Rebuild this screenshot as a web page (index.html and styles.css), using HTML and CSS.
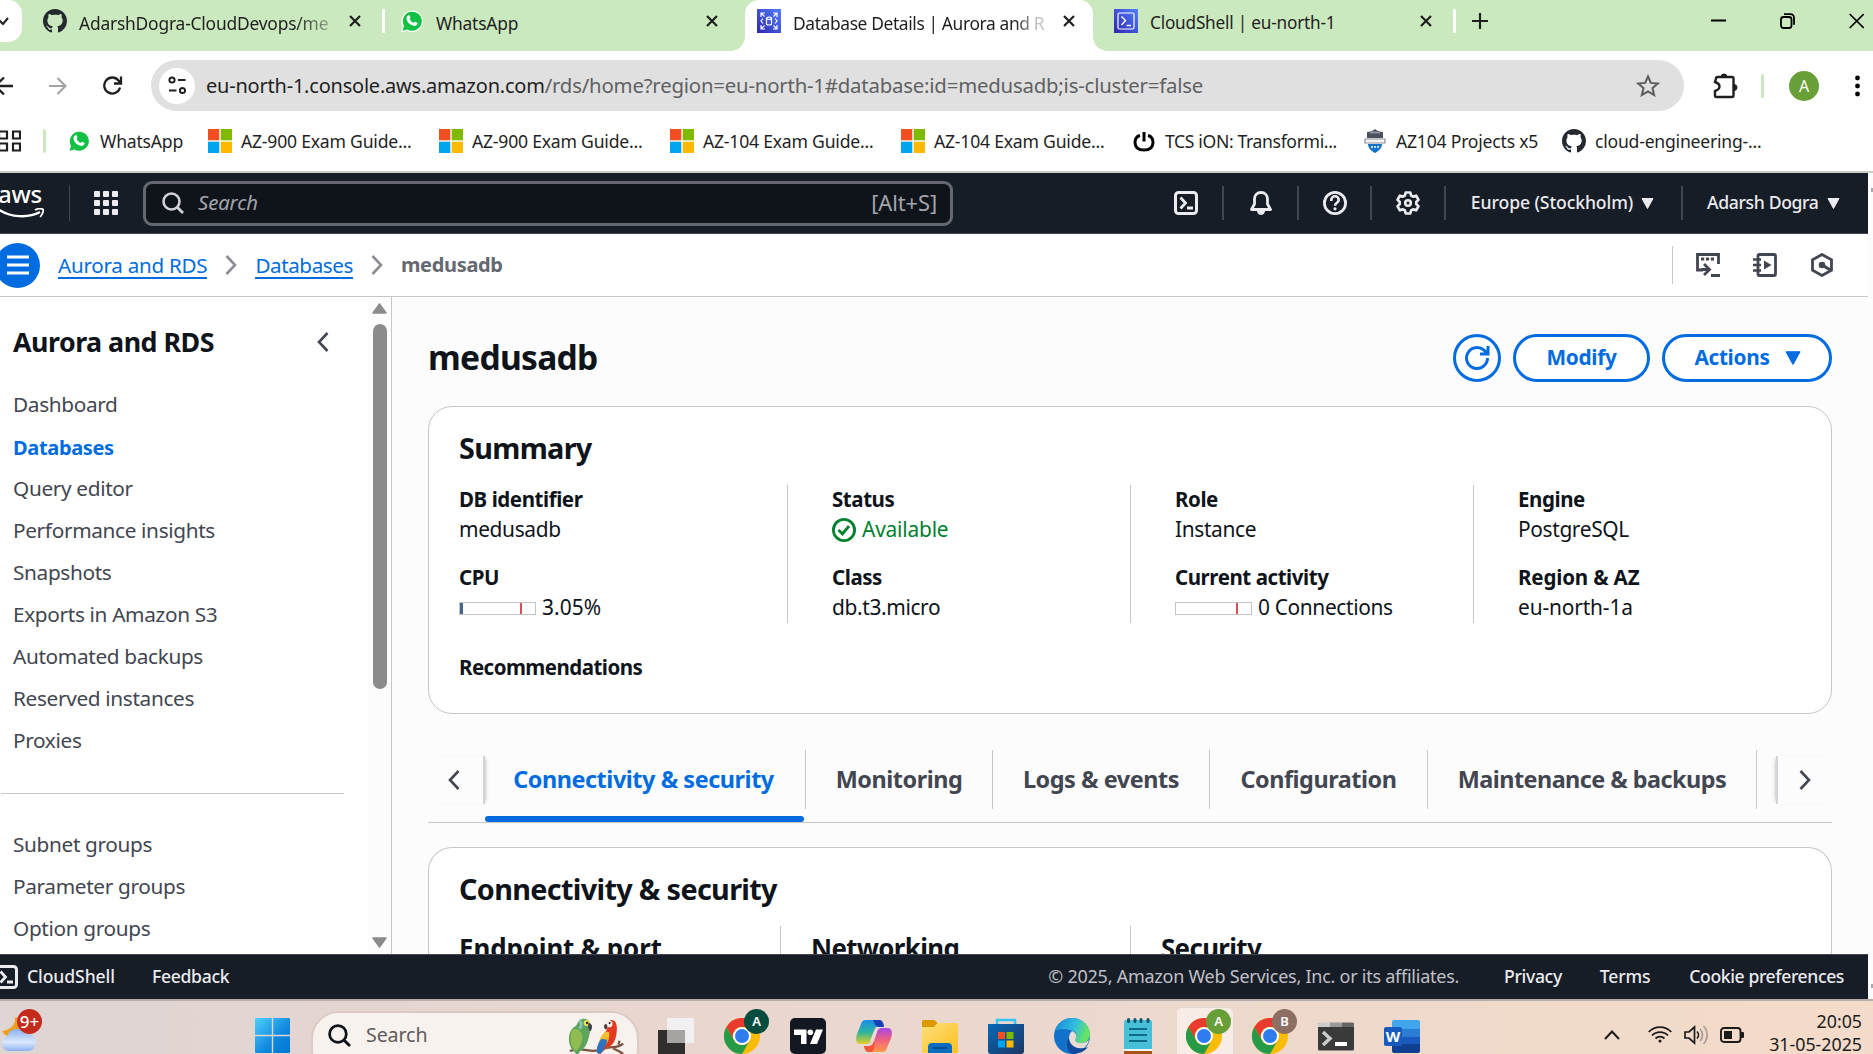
FILE: index.html
```html
<!DOCTYPE html>
<html lang="en">
<head>
<meta charset="utf-8">
<title>Database Details | Aurora and RDS</title>
<link rel="stylesheet" href="styles.css">
</head>
<body>
<svg class="defs" aria-hidden="true">
  <defs>
    <symbol id="github" viewBox="0 0 16 16"><path d="M8 0C3.58 0 0 3.58 0 8c0 3.54 2.29 6.53 5.47 7.59.4.07.55-.17.55-.38 0-.19-.01-.82-.01-1.49-2.01.37-2.53-.49-2.69-.94-.09-.23-.48-.94-.82-1.13-.28-.15-.68-.52-.01-.53.63-.01 1.08.58 1.23.82.72 1.21 1.87.87 2.33.66.07-.52.28-.87.51-1.07-1.78-.2-3.64-.89-3.64-3.95 0-.87.31-1.59.82-2.15-.08-.2-.36-1.02.08-2.12 0 0 .67-.21 2.2.82.64-.18 1.32-.27 2-.27s1.36.09 2 .27c1.53-1.04 2.2-.82 2.2-.82.44 1.1.16 1.92.08 2.12.51.56.82 1.27.82 2.15 0 3.07-1.87 3.75-3.65 3.95.29.25.54.73.54 1.48 0 1.07-.01 1.93-.01 2.2 0 .21.15.46.55.38A8.01 8.01 0 0 0 16 8c0-4.42-3.58-8-8-8z" fill="#24292f"/></symbol>
    <symbol id="whatsapp" viewBox="0 0 24 24"><path d="M1 23.500l1.700-6A10.800 10.800 0 1 1 7 21.800z" fill="#fff"/><path d="M2.600 21.800l1.400-5A9.500 9.500 0 1 1 7.500 20.400z" fill="#12c143"/><path d="M8.300 6.300c.5-.4 1-.3 1.300.3l.8 1.800c.2.500-.2 1-.8 1.700.9 1.900 2.200 3 4.100 3.800.6-.8 1-1.300 1.500-1.100l2 1c.5.300.4.700.2 1.300-.6 1.500-2.300 2.200-4 1.700-3.600-1-6-3.300-6.800-6.600-.3-1.600.4-3 1.700-3.900z" fill="#fff"/></symbol>
    <symbol id="microsoft" viewBox="0 0 24 24"><path d="M0 0h11.300v11.300H0z" fill="#f25022"/><path d="M12.700 0H24v11.300H12.700z" fill="#7fba00"/><path d="M0 12.700h11.300V24H0z" fill="#00a4ef"/><path d="M12.700 12.700H24V24H12.700z" fill="#ffb900"/></symbol>
    <symbol id="close" viewBox="0 0 12 12"><path d="M1 1l10 10M11 1L1 11" stroke="#1f1f1f" stroke-width="2.200"/></symbol>
    <symbol id="shell" viewBox="0 0 24 24"><rect x="1.500" y="1.500" width="21" height="21" rx="3" fill="none" stroke="currentColor" stroke-width="3"/><path d="M6.500 6.500l5 5.500-5 5.500M13 17h6" fill="none" stroke="currentColor" stroke-width="2.800"/></symbol>
    <symbol id="magnifier" viewBox="0 0 22 22"><circle cx="9.500" cy="9.500" r="8" fill="none" stroke="currentColor" stroke-width="2.600"/><path d="M15 15l6 6" stroke="currentColor" stroke-width="2.800"/></symbol>
    <symbol id="chev-left" viewBox="0 0 12 20"><path d="M10.500 1L2 10l8.500 9" fill="none" stroke="currentColor" stroke-width="2.600"/></symbol>
    <symbol id="chev-right" viewBox="0 0 12 20"><path d="M1.500 1L10 10l-8.500 9" fill="none" stroke="currentColor" stroke-width="2.600"/></symbol>
    <symbol id="caret" viewBox="0 0 13 11"><path d="M1 .500h11L6.500 10.500z" fill="currentColor" stroke="currentColor" stroke-linejoin="round"/></symbol>
    <symbol id="chrome" viewBox="0 0 36 36"><circle cx="18" cy="18" r="18" fill="#fbbc05"/><path d="M2.400 9A18 18 0 0 1 33.600 9H18a9 9 0 0 0-8 13.500z" fill="#ea3a2d"/><path d="M2.400 9A18 18 0 0 0 18 36l7.800-13.500a9 9 0 0 1-15.600 0z" fill="#259b47"/><circle cx="18" cy="18" r="9" fill="#fff"/><circle cx="18" cy="18" r="7" fill="#2f7bf0"/></symbol>
    <linearGradient id="aws-blue" x1="0" y1="1" x2="1" y2="0"><stop offset="0" stop-color="#2e27ad"/><stop offset="1" stop-color="#527fff"/></linearGradient>
    <linearGradient id="win" x1="0" y1="0" x2="1" y2="1"><stop offset="0" stop-color="#4fd0ff"/><stop offset=".6" stop-color="#0f87dd"/><stop offset="1" stop-color="#0078d4"/></linearGradient>
    <linearGradient id="cp-left" x1="0" y1="0" x2="0" y2="1"><stop offset="0" stop-color="#1a8bea"/><stop offset=".5" stop-color="#2bb5a0"/><stop offset="1" stop-color="#e3cf24"/></linearGradient>
    <linearGradient id="cp-right" x1="0" y1="0" x2="0" y2="1"><stop offset="0" stop-color="#a548e5"/><stop offset=".5" stop-color="#f0617f"/><stop offset="1" stop-color="#ff9a4a"/></linearGradient>
    <linearGradient id="edge" x1="0" y1="0" x2="1" y2=".3"><stop offset="0" stop-color="#1786d9"/><stop offset=".6" stop-color="#31bde0"/><stop offset="1" stop-color="#66e264"/></linearGradient>
    <linearGradient id="folder" x1="0" y1="0" x2="1" y2="1"><stop offset="0" stop-color="#ffe07a"/><stop offset="1" stop-color="#fdbf22"/></linearGradient>
    <linearGradient id="cloud" x1="0" y1="0" x2="0" y2="1"><stop offset="0" stop-color="#8ab1f1"/><stop offset=".6" stop-color="#dbe8fc"/><stop offset="1" stop-color="#8eb3f0"/></linearGradient>
    <linearGradient id="store" x1="0" y1="0" x2="1" y2="1"><stop offset="0" stop-color="#0669b7"/><stop offset="1" stop-color="#1e3562"/></linearGradient>
  </defs>
</svg>

<header class="tabstrip">
  <div class="tab-search"><svg width="12" height="10" viewBox="0 0 12 10"><path d="M-1 3l4 4 5-6" fill="none" stroke="#1f1f1f" stroke-width="2"/></svg></div>
  <div class="tab tab-github"><svg class="fav"><use href="#github"/></svg><span class="tab-title fade-green">AdarshDogra-CloudDevops/me</span><svg class="x"><use href="#close"/></svg></div>
  <i class="tab-sep"></i>
  <div class="tab tab-whatsapp"><svg class="fav"><use href="#whatsapp"/></svg><span class="tab-title">WhatsApp</span><svg class="x"><use href="#close"/></svg></div>
  <div class="tab tab-active"><svg class="fav" viewBox="0 0 24 24"><path d="M0 0h24v24H0z" fill="url(#aws-blue)"/><g fill="none" stroke="#fff" stroke-width="1.200"><path d="M4 8V4h4M4 4l3.500 3.500M16 4h4v4M20 4l-3.500 3.500M4 16v4h4M4 20l3.500-3.500M20 16v4h-4M20 20l-3.500-3.500M6 9.500L4 12l2 2.500M18 9.500l2 2.500-2 2.500"/><ellipse cx="12" cy="9.300" rx="2.500" ry="1.200"/><path d="M9.500 9.300v5.400c0 1.700 5 1.700 5 0V9.300"/></g></svg><span class="tab-title fade-white">Database Details | Aurora and R</span><svg class="x"><use href="#close"/></svg></div>
  <div class="tab tab-shell"><svg class="fav" viewBox="0 0 24 24"><path d="M0 0h24v24H0z" fill="url(#aws-blue)"/><rect x="4" y="4" width="16" height="16" rx="1.500" fill="none" stroke="#fff" stroke-width="1.200"/><path d="M7.500 7.500l4 4-4 4.500M12.500 16.500h4.500" fill="none" stroke="#fff" stroke-width="1.400"/></svg><span class="tab-title">CloudShell | eu-north-1</span><svg class="x"><use href="#close"/></svg></div>
  <i class="tab-sep"></i>
  <svg class="plus" width="16" height="16"><path d="M8 0v16M0 8h16" stroke="#1f1f1f" stroke-width="2.200"/></svg>
  <div class="window-controls">
    <svg width="15" height="16"><path d="M0 7.500h15" stroke="#000" stroke-width="2"/></svg>
    <svg width="15" height="16"><rect x="1" y="4" width="10.500" height="11" rx="2.500" fill="none" stroke="#000" stroke-width="1.800"/><path d="M4 1.200h6.500a3.500 3.500 0 0 1 3.500 3.500v7" fill="none" stroke="#000" stroke-width="1.800"/></svg>
    <svg width="15" height="16"><path d="M.7 1l14 14M14.700 1L.7 15" stroke="#000" stroke-width="1.700"/></svg>
  </div>
</header>

<div class="toolbar">
  <svg class="nav-back" width="13" height="20" viewBox="0 0 13 20"><path d="M13 10H-4M4 1.500L-5 10l9 8.500" fill="none" stroke="#1f1f1f" stroke-width="2.400"/></svg>
  <svg class="nav-fwd" width="18" height="18" viewBox="0 0 18 18"><path d="M0 9h16.500M8.500 1L16.500 9l-8 8" fill="none" stroke="#a3a3a3" stroke-width="2.200"/></svg>
  <svg class="nav-reload" width="20" height="19" viewBox="0 0 20 19"><path d="M17 11.500A8 8 0 1 1 15.500 4.500L18 7.200M18 .5v7h-7" fill="none" stroke="#1f1f1f" stroke-width="2.300"/></svg>
  <div class="omnibox">
    <div class="site-info"><svg width="18" height="19" viewBox="0 0 18 19" fill="none" stroke="#1f1f1f" stroke-width="2"><circle cx="4" cy="4" r="2.600"/><path d="M10 4h7.500M1 14.500h7.500"/><circle cx="14.500" cy="14.500" r="2.600"/></svg></div>
    <span class="url"><b>eu-north-1.console.aws.amazon.com</b><span>/rds/home?region=eu-north-1#database:id=medusadb;is-cluster=false</span></span>
    <svg class="star" width="24" height="23" viewBox="0 0 24 23"><path d="M12 2.500l2.800 6.400 7 .6-5.300 4.600 1.600 6.900-6.100-3.700L5.900 21l1.600-6.900L2.200 9.500l7-.6z" fill="none" stroke="#5c5c5c" stroke-width="2"/></svg>
  </div>
  <svg class="puzzle" width="25" height="26" viewBox="0 0 25 26"><path d="M3 5.500a1.500 1.500 0 0 1 1.500-1.500h14.500a1.500 1.500 0 0 1 1.500 1.500v17a1.500 1.500 0 0 1-1.500 1.500H3.500a1.500 1.500 0 0 1-1.500-1.500V18c6-2 6-7 0-9z" fill="none" stroke="#1f1f1f" stroke-width="2.400"/><path d="M8 4a3 3 0 0 1 6 0zM21 11.500a3 3 0 0 1 0 6z" fill="#1f1f1f" stroke="#1f1f1f"/></svg>
  <i class="tool-sep"></i>
  <div class="avatar">A</div>
  <svg class="dots" width="5" height="22"><circle cx="2.500" cy="3" r="2.400"/><circle cx="2.500" cy="11" r="2.400"/><circle cx="2.500" cy="19" r="2.400"/></svg>
</div>

<nav class="bookmarks">
  <svg class="apps" width="21" height="22" viewBox="0 0 21 22" fill="none" stroke="#1f1f1f" stroke-width="2.200"><path d="M-1 1.500h8v7h-8zM13 1.500h7v7h-7zM-1 13.500h8v7h-8zM13 13.500h7v7h-7z"/></svg>
  <i class="tool-sep"></i>
  <a class="bm bm-short"><svg><use href="#whatsapp"/></svg>WhatsApp</a>
  <a class="bm"><svg><use href="#microsoft"/></svg>AZ-900 Exam Guide...</a>
  <a class="bm"><svg><use href="#microsoft"/></svg>AZ-900 Exam Guide...</a>
  <a class="bm"><svg><use href="#microsoft"/></svg>AZ-104 Exam Guide...</a>
  <a class="bm"><svg><use href="#microsoft"/></svg>AZ-104 Exam Guide...</a>
  <a class="bm bm-tcs"><svg viewBox="0 0 24 24"><path d="M8 6.500C4 7.500 3 9.500 3 13.500c0 5.500 3 7.500 9 7.500s9-2 9-7.500c0-4-1-6-5-7" fill="none" stroke="#000" stroke-width="3"/><path d="M12 3v9.500" stroke="#000" stroke-width="3"/></svg>TCS iON: Transformi...</a>
  <a class="bm bm-mid"><svg viewBox="0 0 24 24"><path d="M4 3c3 0 6-1 8-3 2 2 5 3 8 3v6H4z" fill="#4c525c"/><path d="M7 3.500h10" stroke="#8d95a3" stroke-width="2"/><path d="M2 10h20v4H2z" fill="#f4f4f4" stroke="#8a8f98" stroke-width="1.200"/><path d="M5 15h14c0 4-3 7-7 9-4-2-7-5-7-9z" fill="#1673c4"/><path d="M8 18h8" stroke="#b8dcf8" stroke-width="2" stroke-dasharray="2 1"/></svg>AZ104 Projects x5</a>
  <a class="bm"><svg><use href="#github"/></svg>cloud-engineering-...</a>
</nav>

<div class="viewport">
<div class="console">
  <header class="topnav">
    <div class="aws-logo"><span>aws</span><svg width="46" height="11" viewBox="0 0 46 11"><path d="M-2 1c12 8.500 30 9.500 42 3" fill="none" stroke="#fff" stroke-width="2.400"/><path d="M35 2c3-1.500 6.500-1.600 8-.6.700 1.400-.5 5-2.800 7.600" fill="none" stroke="#fff" stroke-width="1.800"/></svg></div>
    <i class="nav-sep"></i>
    <svg class="waffle" width="24" height="24" fill="#ebebf0"><rect width="6" height="6" rx="1"/><rect x="9" width="6" height="6" rx="1"/><rect x="18" width="6" height="6" rx="1"/><rect y="9" width="6" height="6" rx="1"/><rect x="9" y="9" width="6" height="6" rx="1"/><rect x="18" y="9" width="6" height="6" rx="1"/><rect y="18" width="6" height="6" rx="1"/><rect x="9" y="18" width="6" height="6" rx="1"/><rect x="18" y="18" width="6" height="6" rx="1"/></svg>
    <div class="searchbox"><svg width="22" height="22"><use href="#magnifier"/></svg><em>Search</em><span>[Alt+S]</span></div>
    <div class="topcells">
      <div class="cell c74"><svg width="24" height="24"><use href="#shell"/></svg></div>
      <div class="cell c75"><svg width="24" height="24" viewBox="0 0 24 24"><path d="M12 1.500c4 0 6.500 2.800 6.500 6.500v5l3 5.500h-19l3-5.500V8c0-3.700 2.500-6.500 6.500-6.500z" fill="none" stroke="currentColor" stroke-width="2.800" stroke-linejoin="round"/><path d="M8.500 20h7a3.500 3.500 0 0 1-7 0z" fill="currentColor" stroke="currentColor"/></svg></div>
      <div class="cell c73"><svg width="24" height="24" viewBox="0 0 24 24"><circle cx="12" cy="12" r="10.600" fill="none" stroke="currentColor" stroke-width="2.800"/><path d="M8.300 10V9a3.700 3.700 0 0 1 7.400 0c0 2.700-3.700 2.700-3.700 5.700" fill="none" stroke="currentColor" stroke-width="2.600"/><circle cx="12" cy="17.800" r="1.600" fill="currentColor"/></svg></div>
      <div class="cell c74"><svg width="24" height="24" viewBox="0 0 24 24"><path d="M9.700 1.500h4.600l.8 3 2 1.100 3-.9 2.300 4-2.100 2.200v2.200l2.100 2.200-2.300 4-3-.9-2 1.100-.8 3H9.700l-.8-3-2-1.100-3 .9-2.300-4 2.100-2.200v-2.200L1.600 8.700l2.300-4 3 .9 2-1.100z" fill="none" stroke="currentColor" stroke-width="2.700" stroke-linejoin="round"/><circle cx="12" cy="12" r="2.800" fill="none" stroke="currentColor" stroke-width="2.600"/></svg></div>
      <div class="cell c237"><span>Europe (Stockholm)</span><svg width="13" height="11"><use href="#caret"/></svg></div>
      <div class="cell cell-user"><span>Adarsh Dogra</span><svg width="13" height="11"><use href="#caret"/></svg></div>
    </div>
  </header>

  <div class="crumbbar">
    <div class="burger"><svg width="22" height="20"><path d="M0 2h22M0 10h22M0 18h22" stroke="#fff" stroke-width="2.800"/></svg></div>
    <a class="crumb">Aurora and RDS</a>
    <svg class="crumb-chev"><use href="#chev-right"/></svg>
    <a class="crumb">Databases</a>
    <svg class="crumb-chev"><use href="#chev-right"/></svg>
    <b class="crumb-now">medusadb</b>
    <div class="crumb-tools">
      <svg width="24" height="24" viewBox="0 0 24 24"><path d="M7 17H1.500V1.500h21V11" fill="none" stroke="#424650" stroke-width="2.800"/><path d="M5 6h13" stroke="#424650" stroke-width="3" stroke-dasharray="3.200 1.700"/><path d="M5 16.500h7M8 11l5.500 5.500L8 22" fill="none" stroke="#424650" stroke-width="2.800"/><path d="M15 22.500h9" stroke="#424650" stroke-width="3"/></svg>
      <svg width="24" height="24" viewBox="0 0 24 24"><rect x="5" y="1.500" width="17.500" height="21" rx="1.500" fill="none" stroke="#424650" stroke-width="2.800"/><path d="M0 6.500h8M0 12h8M0 17.500h8" stroke="#424650" stroke-width="2.500"/><path d="M11 7.500l7.500 4.500-7.500 4.500z" fill="#424650"/></svg>
      <svg width="24" height="24" viewBox="0 0 24 24"><path d="M12 1.500l9.500 5.300v10.400L12 22.500l-9.500-5.300V6.800z" fill="none" stroke="#424650" stroke-width="2.800"/><circle cx="12" cy="12" r="3.300" fill="#424650"/><path d="M12 12l8.500 5" stroke="#424650" stroke-width="3"/></svg>
    </div>
  </div>

  <div class="body">
    <aside class="sidebar">
      <div class="side-content">
        <div class="side-head"><h2>Aurora and RDS</h2><svg width="12" height="20"><use href="#chev-left"/></svg></div>
        <ul>
          <li>Dashboard</li><li class="on">Databases</li><li>Query editor</li><li>Performance insights</li><li>Snapshots</li><li>Exports in Amazon S3</li><li>Automated backups</li><li>Reserved instances</li><li>Proxies</li>
        </ul>
        <hr>
        <ul><li>Subnet groups</li><li>Parameter groups</li><li>Option groups</li></ul>
      </div>
      <div class="side-scroll">
        <svg width="15" height="11" viewBox="0 0 15 11"><path d="M7.500 1L14 10H1z" fill="#8b8b8b" stroke="#8b8b8b" stroke-width="1.500" stroke-linejoin="round"/></svg>
        <i class="thumb"></i>
        <svg width="15" height="11" viewBox="0 0 15 11"><path d="M7.500 10L14 1H1z" fill="#8b8b8b" stroke="#8b8b8b" stroke-width="1.500" stroke-linejoin="round"/></svg>
      </div>
    </aside>

    <main class="main">
      <div class="title-row">
        <h1>medusadb</h1>
        <button class="btn btn-round"><svg width="26" height="26" viewBox="0 0 26 26"><path d="M23.500 13a10.500 10.500 0 1 1-3.500-7.800l3.500 3.500M24 1v8h-8" fill="none" stroke="#006ce0" stroke-width="3"/></svg></button>
        <button class="btn btn-modify"><span>Modify</span></button>
        <button class="btn btn-actions"><span>Actions</span><svg width="16" height="14" viewBox="0 0 13 11"><path d="M1 .5h11L6.500 10.500z" fill="#006ce0" stroke="#006ce0" stroke-linejoin="round"/></svg></button>
      </div>

      <section class="card summary">
        <h3>Summary</h3>
        <div class="facts">
          <dl><dt>DB identifier</dt><dd>medusadb</dd><dt>CPU</dt><dd><i class="meter"><i class="used"></i></i><span class="pct">3.05%</span></dd></dl>
          <dl><dt>Status</dt><dd class="ok"><svg width="24" height="24" viewBox="0 0 24 24"><circle cx="12" cy="12" r="10.600" fill="none" stroke="#00802f" stroke-width="2.800"/><path d="M6.500 12l4 4 6.500-8" fill="none" stroke="#00802f" stroke-width="2.800"/></svg>Available</dd><dt>Class</dt><dd>db.t3.micro</dd></dl>
          <dl><dt>Role</dt><dd>Instance</dd><dt>Current activity</dt><dd><i class="meter"></i>0 Connections</dd></dl>
          <dl><dt>Engine</dt><dd>PostgreSQL</dd><dt class="region">Region &amp; AZ</dt><dd class="region">eu-north-1a</dd></dl>
        </div>
        <b class="reco">Recommendations</b>
      </section>

      <div class="tabs">
        <div class="tabs-prev"><svg width="12" height="20"><use href="#chev-left"/></svg></div>
        <div class="t t1">Connectivity &amp; security</div>
        <div class="t t2">Monitoring</div>
        <div class="t t3">Logs &amp; events</div>
        <div class="t t4">Configuration</div>
        <div class="t t5">Maintenance &amp; backups</div>
        <div class="tabs-next"><svg width="12" height="20"><use href="#chev-right"/></svg></div>
      </div>

      <section class="card conn">
        <h3>Connectivity &amp; security</h3>
        <div class="conn-cols"><h4 class="wide">Endpoint &amp; port</h4><h4>Networking</h4><h4>Security</h4></div>
      </section>
    </main>
  </div>

  <footer class="footer">
    <svg class="foot-shell" width="24" height="24"><use href="#shell"/></svg>
    <span class="foot-cs">CloudShell</span><span class="feedback">Feedback</span>
    <span class="copy">© 2025, Amazon Web Services, Inc. or its affiliates.</span>
    <span class="privacy">Privacy</span><span class="terms">Terms</span><span class="cookie">Cookie preferences</span>
  </footer>
</div>
<div class="page-scroll"><i></i><i></i></div>
</div>

<div class="taskbar">
  <div class="weather"><svg width="40" height="40" viewBox="0 0 40 40"><path d="M15 4c1 8-5 13-13 14 1 2 3 4 5 5l15-3V6z" fill="#f0a01e"/><path d="M8 38a7.500 7.500 0 0 1-1-14.500A10.500 10.500 0 0 1 26 21a8.500 8.500 0 0 1 3 17z" fill="url(#cloud)"/></svg><b class="count">9+</b></div>
  <svg class="start" width="35" height="35" viewBox="0 0 35 35"><path d="M1 0h15.800v16.800H0V1a1 1 0 0 1 1-1zM18.200 0H34a1 1 0 0 1 1 1v15.800H18.200zM0 18.200h16.800V35H1a1 1 0 0 1-1-1zM18.200 18.200H35V34a1 1 0 0 1-1 1H18.200z" fill="url(#win)"/></svg>
  <div class="task-search"><svg class="mag" width="23" height="23"><use href="#magnifier"/></svg><span>Search</span>
    <svg class="parrots" width="58" height="38" viewBox="0 0 62 40"><path d="M2 35c14-6 22 4 34-2 10-4 16 0 23-6M48 32l6 3 5 3M54 28l1-4" fill="none" stroke="#7d5340" stroke-width="2.500"/><path d="M14 1c6-2 11 2 10 9-1 10-4 22-11 25l-3 5-3-4C-1 30-1 14 7 9c3-1 3-6 7-8z" fill="#5da45c"/><path d="M5 12c5-2 12 2 10 12-1 5-4 9-7 11-6-5-7-17-3-23z" fill="#91bc52"/><path d="M12 2c3 3 3 7 0 9" stroke="#86c7b9" stroke-width="3" fill="none"/><circle cx="20" cy="5" r="3.200" fill="#f6df55"/><circle cx="20.500" cy="5" r="1.300" fill="#222"/><path d="M22 5c5 1 4 6 2 9-2-2-3-4-2-9z" fill="#3c4247"/><path d="M45 2c6-1 8 4 7 13-1 9-4 15-11 17l-8 7-1-3c2-8 4-17 9-23z" fill="#e3391f"/><path d="M41 14c-6 3-8 10-9 17l5 2c4-4 8-11 7-18z" fill="#f3bf2e"/><path d="M36 22c-4 4-6 11-5 15l4 1c3-3 6-9 7-15z" fill="#2e71bd"/><circle cx="44" cy="6" r="3.600" fill="#f7ebe3"/><circle cx="44.500" cy="5" r="1.100" fill="#222"/><path d="M41 6c-3 0-3 4-1 6 2-1 3-3 1-6z" fill="#443936"/></svg>
  </div>
  <div class="apps-row">
    <svg viewBox="0 0 36 36"><path d="M0 12h27v24H0z" fill="#302f2e"/><path d="M9 0h27v25H9z" fill="#f2f2f2" opacity=".9"/><path d="M9 12h18v13H9z" fill="#a5a4a3"/></svg>
    <div class="badged"><svg viewBox="0 0 36 36"><use href="#chrome"/></svg><b class="bg-teal">A</b></div>
    <svg viewBox="0 0 36 36"><rect width="36" height="36" rx="5" fill="#131722"/><path d="M4 11.500h12.500V26H11V17H4zM26 11.500h7L27 26h-7z" fill="#fff"/><circle cx="20.300" cy="14.300" r="2.800" fill="#fff"/></svg>
    <svg viewBox="0 0 36 36"><path d="M10 2h13c3 0 4 2 5 6h-5c-3 0-4 2-5 5l-3 9c-1 3-2 4-5 4H5c-5 0-6-4-4-10L5 6c1-3 2-4 5-4z" fill="url(#cp-left)"/><path d="M17 2h6c3 0 4 2 5 7h-5c-3 0-4-2-6-7z" fill="#1a3fb5"/><path d="M26 34H13c-3 0-4-2-5-6h5c3 0 4-2 5-5l3-9c1-3 2-4 5-4h5c5 0 6 4 4 10l-4 10c-1 3-2 4-5 4z" fill="url(#cp-right)"/><path d="M8 28h5c3 0 4-2 5-5 1 4 1 8-2 11h-3c-3 0-4-2-5-6z" fill="#f2563c"/><path d="M18 13h3l-4 10h-3z" fill="#eadcd7"/></svg>
    <svg viewBox="0 0 36 36"><path d="M0 3.500A1.500 1.500 0 0 1 1.500 2h11l3 3-3 4H0z" fill="#dd9a00"/><path d="M0 9h12l4-4h19a1 1 0 0 1 1 1v29H0z" fill="url(#folder)"/><path d="M6 35v-6c0-2 1-4 4-4h16c3 0 4 2 4 4v6z" fill="#0c6cc0"/><path d="M11 30h14" stroke="#064e94" stroke-width="2"/></svg>
    <svg viewBox="0 0 36 36"><path d="M9 7V2h18v5" fill="none" stroke="#34c5f5" stroke-width="2.500"/><path d="M0 6h36v27a3 3 0 0 1-3 3H3a3 3 0 0 1-3-3z" fill="url(#store)"/><path d="M10 14h7v7h-7z" fill="#f25022"/><path d="M18.500 14h7v7h-7z" fill="#7fba00"/><path d="M10 22.500h7v7h-7z" fill="#00a4ef"/><path d="M18.500 22.500h7v7h-7z" fill="#ffb900"/></svg>
    <svg viewBox="0 0 36 36"><circle cx="18" cy="18" r="18" fill="#1271c9"/><path d="M1 13C4 5 10 0 18 0c10 0 18 7 18 16 0 6-4 9-9 9-4 0-7-2-5-5 1-4-1-8-6-8-6-2-12-1-15 1z" fill="url(#edge)"/><path d="M22 20c-2 3 1 5 5 5 3 0 6-1 8-3-1 4-3 6-5 8-6 2-15-2-15-10 0-3 1-5 3-7 3 1 5 4 4 7z" fill="#eadbd3"/><path d="M15 20c0 8 9 13 19 9-4 5-10 7-16 7-5-3-7-11-3-16z" fill="#124a9b"/></svg>
    <svg viewBox="0 0 36 36"><path d="M4 33h28v3H4z" fill="#a65514"/><path d="M4 4a2 2 0 0 1 2-2h24a2 2 0 0 1 2 2v28H4z" fill="#48bfd9"/><path d="M4 31h28v2H4z" fill="#f4f4f4"/><path d="M8.500 1.500v2M15 1.500v2M21 1.500v2M28 1.500v2" stroke="#0c5569" stroke-width="3" stroke-linecap="round"/><path d="M9 11h18M9 17h18M9 23h18" stroke="#0b6e86" stroke-width="2"/></svg>
    <div class="badged active"><svg viewBox="0 0 36 36"><use href="#chrome"/></svg><b class="bg-green">A</b></div>
    <div class="badged"><svg viewBox="0 0 36 36"><use href="#chrome"/></svg><b class="bg-brown">B</b></div>
    <svg viewBox="0 0 36 36"><path d="M0 5h36v26a1.500 1.500 0 0 1-1.500 1.500h-33A1.500 1.500 0 0 1 0 31z" fill="#3a3a3a"/><path d="M0 9V6a1.500 1.500 0 0 1 1.500-1.500H12V9z" fill="#ccc"/><path d="M12 4.500h12V9H12z" fill="#999"/><path d="M24 4.500h10.500A1.500 1.500 0 0 1 36 6v3H24z" fill="#666"/><path d="M5 14l7 6.500L5 27" fill="none" stroke="#ccc" stroke-width="3.500"/><path d="M17 26h12" stroke="#fff" stroke-width="4"/></svg>
    <svg viewBox="0 0 36 36"><path d="M8 4a2 2 0 0 1 2-2h24a2 2 0 0 1 2 2v7H8z" fill="#41a5ee"/><path d="M8 11h28v8H8z" fill="#2b7cd3"/><path d="M8 19h28v7H8z" fill="#185abd"/><path d="M8 26h28v7a2 2 0 0 1-2 2H10a2 2 0 0 1-2-2z" fill="#103f91"/><rect y="9" width="18" height="19" rx="2" fill="#185abd"/><text x="9" y="23.500" class="w-letter">W</text></svg>
  </div>
  <div class="tray">
    <svg width="16" height="10"><path d="M1 9l7-7.500L15 9" fill="none" stroke="#1b1b1b" stroke-width="2"/></svg>
    <svg class="wifi" width="24" height="18" viewBox="0 0 24 18" fill="none" stroke="#1b1b1b" stroke-width="1.800"><path d="M.7 7a15.500 15.500 0 0 1 22.600 0M4 10.500a11 11 0 0 1 16 0M7.500 13.500a6.500 6.500 0 0 1 9 0"/><circle cx="12" cy="16" r="1.500" fill="#1b1b1b" stroke="none"/></svg>
    <svg class="vol" width="24" height="20" viewBox="0 0 24 20" fill="none" stroke="#1b1b1b" stroke-width="1.700"><path d="M1 7h4l5.500-5v16L5 13H1zM13 6.500a5 5 0 0 1 0 7"/><path d="M16 4a8.500 8.500 0 0 1 0 12M19.500 1a13 13 0 0 1 0 18" stroke="#a89c96"/></svg>
    <svg class="bat" width="24" height="16" viewBox="0 0 24 16"><rect x="1" y="1" width="19.500" height="14" rx="3" fill="none" stroke="#1b1b1b" stroke-width="1.900"/><path d="M4 4h8v8H4zM21 5h2a1 1 0 0 1 1 1v4a1 1 0 0 1-1 1h-2z" fill="#1b1b1b"/></svg>
    <div class="clock"><span>20:05</span><span>31-05-2025</span></div>
  </div>
</div>
</body>
</html>
```
FILE: styles.css
```css
* { box-sizing: border-box; }
body { margin: 0; width: 1873px; height: 1054px; overflow: hidden; background: #fff; font-family: "Noto Sans", "Open Sans", sans-serif; color: #0f141a; display: flex; flex-direction: column; }
svg { display: block; flex: none; }
.defs { position: absolute; width: 0; height: 0; }
h1, h2, h3, h4, ul, dl, dd, hr { margin: 0; padding: 0; }
span, b, a, li, em { white-space: nowrap; }

/* Browser tab strip */
.tabstrip { height: 51px; flex: none; background: #cbe9be; display: flex; align-items: flex-start; font-size: 17.400px; letter-spacing: -.2px; color: #1f1f1f; }
.tab-search { width: 22px; height: 42px; background: #fff; border-radius: 0 14px 14px 0; padding: 17px 0 0; }
.tab { height: 42px; display: flex; align-items: center; position: relative; }
.fav { width: 24px; height: 24px; margin-right: 12px; }
.tab-title { flex: 1; overflow: hidden; padding-top: 3px; line-height: 26px; }
.x { width: 12px; height: 14px; }
.tab-github { width: 339px; padding-left: 21px; }
.tab-github .tab-title { flex: none; width: 250px; margin-right: 20px; }
.fade-green { -webkit-mask-image: linear-gradient(90deg, #000 86%, #0005 100%); }
.fade-white { -webkit-mask-image: linear-gradient(90deg, #000 88%, #0004 97%); }
.tab-sep { width: 3px; height: 24px; margin: 9px 0 0 21px; background: #fff; border-radius: 1px; }
.tab-whatsapp { width: 360px; padding: 0 27px 0 15px; }
.tab-active { width: 348px; height: 51px; padding: 0 18px 9px 12px; background: #fff; border-radius: 14px 14px 0 0; }
.tab-active .tab-title { flex: none; width: 252px; margin-right: 18px; letter-spacing: -.38px; }
.tab-active::before, .tab-active::after { content: ""; position: absolute; bottom: 0; width: 14px; height: 14px; }
.tab-active::before { left: -14px; background: radial-gradient(circle at 0 0, #0000 13.500px, #fff 14px); }
.tab-active::after { right: -14px; background: radial-gradient(circle at 100% 0, #0000 13.500px, #fff 14px); }
.tab-shell { width: 339px; padding-left: 21px; }
.tab-shell .tab-title { font-size: 17.200px; }
.plus { margin: 13px 0 0 16px; }
.window-controls { margin: 13px 9px 0 auto; display: flex; gap: 54px; }

/* Address row */
.toolbar { height: 69px; flex: none; display: flex; align-items: center; }
.nav-back { margin-top: 1px; }
.nav-fwd { margin-left: 36px; }
.nav-reload { margin-left: 36px; }
.omnibox { margin-left: 28px; width: 1533px; height: 51px; border-radius: 26px; background: #e0e0e0; display: flex; align-items: center; padding: 0 24px 0 8px; }
.site-info { width: 36px; height: 36px; border-radius: 50%; background: #fff; display: flex; align-items: center; justify-content: center; }
.url { margin-left: 11px; flex: 1; font-size: 19.980px; letter-spacing: -.2px; padding-bottom: 1px; }
.url b { font-weight: 400; color: #1f1f1f; }
.url span { color: #5f6062; font-size: 20.380px; }
.puzzle { margin-left: 29px; }
.tool-sep { width: 3px; height: 24px; border-radius: 2px; background: #cbe9be; margin-left: 23px; }
.avatar { width: 30px; height: 30px; margin-left: 25px; border-radius: 50%; background: #689f38; color: #fff; font-size: 16px; line-height: 30px; text-align: center; }
.dots { margin-left: 36px; }

/* Bookmarks */
.bookmarks { height: 42px; flex: none; display: flex; align-items: center; margin-bottom: 9px; }
.bookmarks .tool-sep { margin-left: 22px; margin-right: 21px; }
.bm { width: 231px; display: flex; align-items: center; gap: 9px; font-size: 17.600px; letter-spacing: -.22px; line-height: 24px; color: #1f1f1f; flex: none; }
.bm svg { width: 24px; height: 24px; }
.bm-short { width: 141px; }
.bm-tcs { letter-spacing: -.36px; }
.bm-mid { width: 199px; }

/* Console shell */
.viewport { height: 828px; flex: none; display: flex; border-top: 2px solid #c9cdc7; }
.console { width: 1868px; display: flex; flex-direction: column; }
.page-scroll { width: 5px; background: #fcfcfc; display: flex; flex-direction: column; justify-content: space-between; align-items: flex-end; padding: 15px 0 11px; }
.page-scroll i { width: 2px; height: 4px; background: #aaa; }
.topnav { height: 61px; flex: none; background: #161d26; border-bottom: 1px solid #424650; display: flex; align-items: center; color: #ebebf0; }
.aws-logo { width: 46px; }
.aws-logo span { display: block; font-size: 24px; font-weight: 500; letter-spacing: -.3px; line-height: 22px; margin: -4px 0 3px -2px; color: #fff; }
.nav-sep { width: 1px; height: 36px; margin-left: 23px; background: #424650; }
.waffle { margin-left: 24px; }
.searchbox { margin-left: 25px; width: 810px; height: 45px; border: 3px solid #656871; border-radius: 9px; background: #0f141a; display: flex; align-items: center; padding: 0 13px 0 16px; font-size: 20.300px; letter-spacing: -.1px; color: #a4a4ad; }
.searchbox svg { color: #d0d0d6; }
.searchbox em { margin-left: 14px; flex: 1; padding-bottom: 2px; }
.searchbox span { font-size: 21.900px; padding-bottom: 2px; }
.topcells { margin-left: auto; display: flex; font-size: 17.600px; letter-spacing: -.1px; font-weight: 500; }
.cell { height: 34px; display: flex; align-items: center; justify-content: center; gap: 8px; border-right: 2px solid #424650; }
.cell span { padding-bottom: 2px; }
.c73 { width: 73px; } .c74 { width: 74px; } .c75 { width: 75px; } .c237 { width: 237px; padding-right: 2px; }
.cell-user { width: 185px; border: 0; justify-content: flex-start; padding-left: 24px; letter-spacing: -.35px; }

.crumbbar { height: 63px; flex: none; border-bottom: 1px solid #c6c6cd; display: flex; align-items: center; font-size: 20.600px; letter-spacing: -.25px; }
.burger { width: 45px; height: 45px; margin-left: -5px; border-radius: 50%; background: #006ce0; display: flex; align-items: center; justify-content: center; margin-right: 18px; }
.crumb { color: #006ce0; line-height: 24px; border-bottom: 2px solid #006ce0; padding-top: 1px; margin-top: 1px; }
.crumb + .crumb-chev + .crumb { letter-spacing: -.4px; }
.crumb-chev { width: 12px; height: 20px; color: #8c8c94; margin: 0 18px; }
.crumb-now { color: #656871; font-size: 20px; letter-spacing: -.33px; padding-bottom: 2px; }
.crumb-tools { margin-left: auto; margin-right: 34px; height: 38px; border-left: 1px solid #c6c6cd; padding-left: 23px; display: flex; align-items: center; gap: 33px; }

.body { height: 657px; flex: none; display: flex; overflow: hidden; }
.sidebar { width: 392px; border-right: 1px solid #c6c6cd; display: flex; }
.side-content { width: 368px; }
.side-head { height: 87px; padding: 0 39px 0 13px; display: flex; justify-content: space-between; align-items: center; }
.side-head svg { color: #424650; margin-top: 2px; }
.side-head h2 { font-size: 26.800px; font-weight: 700; letter-spacing: -.5px; line-height: 36px; padding-top: 3px; }
.side-content li { list-style: none; height: 42px; line-height: 41px; padding-left: 13px; font-size: 20.800px; letter-spacing: -.35px; color: #424650; }
.side-content .on { color: #006ce0; font-weight: 700; font-size: 20px; letter-spacing: -.35px; line-height: 43px; }
.side-content hr { border: 0; height: 1px; background: #c6c6cd; margin: 31px 24px 30px 1px; }
.side-scroll { width: 23px; background: #fcfcfc; display: flex; flex-direction: column; align-items: center; padding: 6px 0 6px; }
.thumb { width: 14px; height: 365px; margin: 10px 0 auto; border-radius: 7px; background: #8b8b8b; }

.main { width: 1476px; padding: 37px 36px 0 36px; background: #fcfcfd; }
.title-row { height: 48px; display: flex; align-items: center; margin-bottom: 24px; }
h1 { font-size: 33.600px; letter-spacing: -.7px; line-height: 48px; flex: 1; padding-bottom: 3px; }
.btn { height: 48px; border: 3px solid #006ce0; border-radius: 24px; background: #fff; color: #006ce0; font: 700 20.800px "Noto Sans", sans-serif; letter-spacing: -.3px; padding: 0; margin-left: 12px; display: flex; align-items: center; justify-content: center; }
.btn span { padding-bottom: 2px; }
.btn-round { width: 48px; }
.btn-modify { width: 137px; }
.btn-actions { width: 170px; gap: 15px; padding-left: 1px; }
.card { background: #fff; border: 1px solid #c6c6cd; border-radius: 24px; padding-left: 30px; }
.card h3 { font-size: 28.800px; letter-spacing: -.67px; line-height: 34px; padding-bottom: 2px; }
.summary { height: 308px; padding-top: 24px; }
.facts { margin-top: 18px; display: grid; grid-template-columns: 328px 343px 343px 1fr; }
.facts dl { line-height: 29px; height: 138px; }
.facts dl + dl { border-left: 1px solid #c6c6cd; padding-left: 44px; }
dt, .reco { font-weight: 700; font-size: 20.500px; letter-spacing: -.44px; }
dt { height: 30px; }
dd { font-size: 20.900px; letter-spacing: -.36px; height: 30px; display: flex; align-items: center; padding-bottom: 1px; }
dd + dt { margin-top: 18px; }
dt.region, dd.region { letter-spacing: -.15px; }
.pct { letter-spacing: .1px; }
.ok { color: #00802f; gap: 6px; letter-spacing: -.2px; }
.meter { width: 77px; height: 13px; margin: 1px 6px 0 0; border: 1px solid #c4c4c4; display: block; background: linear-gradient(#d94f55, #d94f55) 60px 0 / 2px 100% no-repeat; }
.used { display: block; width: 3px; height: 11px; background: #42668c; }
.reco { display: block; margin-top: 30px; line-height: 29px; letter-spacing: -.54px; }

.tabs { height: 87px; margin-top: 22px; border-bottom: 1px solid #c6c6cd; display: flex; align-items: flex-start; padding-top: 14px; font-size: 23.400px; letter-spacing: -.44px; font-weight: 700; color: #424650; }
.tabs-prev, .tabs-next { width: 57px; height: 48px; margin-top: 6px; display: flex; align-items: center; }
.tabs-prev { padding-left: 20px; border-right: 2px solid #d2d2d9; box-shadow: 3px 0 4px -3px #0005; }
.tabs-next { width: 56px; margin-left: auto; padding-left: 21px; border-left: 2px solid #d2d2d9; box-shadow: -3px 0 4px -3px #0005; }
.t { height: 59px; line-height: 59px; border-right: 1px solid #c6c6cd; text-align: center; white-space: nowrap; }
.t1 { width: 321px; padding-right: 3px; color: #006ce0; position: relative; }
.t1::after { content: ""; position: absolute; left: 0; bottom: -13px; width: 319px; height: 6px; border-radius: 3px; background: #006ce0; }
.t2 { width: 187px; } .t3 { width: 217px; } .t4 { width: 218px; } .t5 { width: 329px; letter-spacing: -.54px; }

.conn { height: 300px; margin-top: 24px; padding-top: 24px; border-bottom: 0; }
.conn-cols { margin-top: 18px; display: grid; grid-template-columns: 321px 350px 1fr; }
h4 { font-size: 25.900px; letter-spacing: -.65px; line-height: 44px; height: 60px; }
h4.wide { letter-spacing: -.1px; }
h4 + h4 { border-left: 1px solid #c6c6cd; padding-left: 30px; }

.footer { height: 45px; flex: none; background: #161d26; border-top: 1px solid #424650; display: flex; align-items: center; color: #ebebf0; font-size: 17.600px; letter-spacing: -.1px; font-weight: 500; }
.footer span { padding-bottom: 2px; }
.foot-shell { margin-left: -6px; }
.foot-cs { margin-left: 9px; margin-right: 37px; }
.feedback { letter-spacing: -.3px; }
.copy { margin-left: auto; color: #c0c0c8; font-weight: 400; font-size: 18px; letter-spacing: -.25px; }
.privacy { margin-left: 45px; letter-spacing: -.35px; }
.terms { margin-left: 38px; letter-spacing: -.2px; }
.cookie { margin-left: 39px; margin-right: 24px; letter-spacing: -.4px; }

/* Windows taskbar */
.taskbar { height: 55px; flex: none; border-top: 2px solid #b7aeab; background: linear-gradient(90deg, #ded5d4, #e7d5d0 25%, #ecd8ce 60%, #f1dac9 85%, #f5dbca); display: flex; align-items: flex-start; overflow: hidden; }
.weather { width: 42px; position: relative; padding-top: 12px; }
.count { position: absolute; left: 17px; top: 8px; width: 25px; height: 25px; border-radius: 50%; background: #c42b1c; color: #fff; font: 500 17px/25px "Noto Sans", sans-serif; text-align: center; }
.start { margin: 17px 0 0 213px; }
.task-search { margin: 10px 0 0 21px; width: 328px; height: 66px; border-radius: 28px; background: #f8f2ef; border: 2px solid #dccbc5; display: flex; align-items: flex-start; padding-left: 15px; }
.mag { margin-top: 11px; }
.task-search span { margin: 8px 0 0 15px; font-size: 19.600px; letter-spacing: -.1px; line-height: 28px; color: #5f5b5a; flex: 1; }
.parrots { margin: 5px 11px 0 0; }
.apps-row { margin: 17px 0 0 19px; display: flex; gap: 30px; }
.apps-row svg { width: 36px; height: 36px; }
.badged { position: relative; }
.badged svg { position: relative; }
.badged b { position: absolute; left: 20px; top: -9px; width: 25px; height: 25px; border-radius: 50%; font: 600 13px/25px "Noto Sans", sans-serif; text-align: center; color: #fff; }
.active::before { content: ""; position: absolute; left: -10px; top: -11px; width: 56px; height: 60px; border-radius: 6px; background: #f7ece6; border: 1px solid #ead9d0; }
.bg-teal { background: #064d40; } .bg-green { background: #689f38; } .bg-brown { background: #8d6e63; }
.w-letter { font: 700 15px "Noto Sans", sans-serif; fill: #fff; text-anchor: middle; }
.tray { margin-left: auto; margin-right: 11px; display: flex; align-items: flex-start; }
.tray > svg { margin-top: 29px; }
.tray .wifi { margin: 24px 0 0 28px; }
.tray .vol { margin: 24px 0 0 12px; }
.tray .bat { margin: 26px 0 0 12px; }
.clock { width: 118px; display: flex; flex-direction: column; align-items: flex-end; font-size: 17.800px; padding-top: 9px; color: #1b1b1b; }
.clock span { line-height: 23px; }
```
